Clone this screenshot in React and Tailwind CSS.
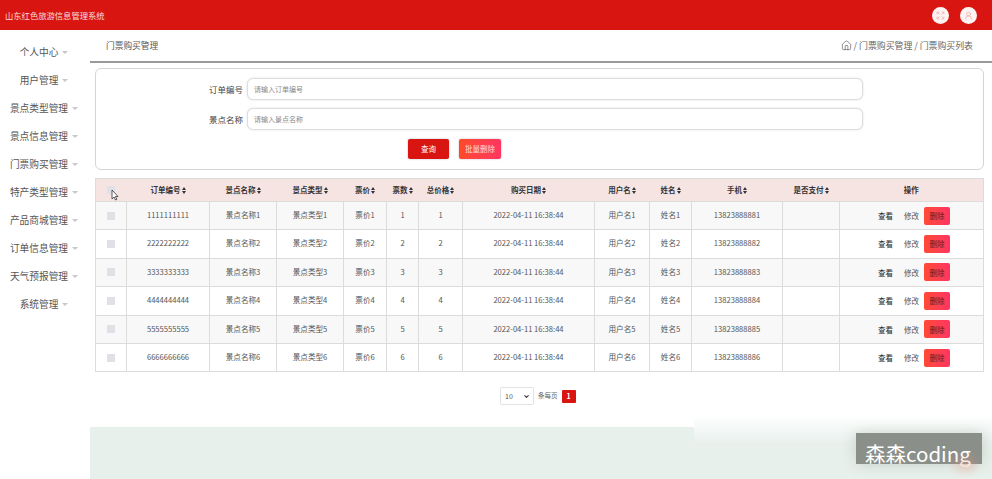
import React from 'react';
import { Expand, UserRound, Home, ChevronDown } from 'lucide-react';

const menu = ['个人中心', '用户管理', '景点类型管理', '景点信息管理', '门票购买管理', '特产类型管理', '产品商城管理', '订单信息管理', '天气预报管理', '系统管理'];

const columns = [
  { label: '', width: 'w-[31px]' },
  { label: '订单编号', width: 'w-[83px]' },
  { label: '景点名称', width: 'w-[67px]' },
  { label: '景点类型', width: 'w-[67px]' },
  { label: '票价', width: 'w-[43px]' },
  { label: '票数', width: 'w-[32px]' },
  { label: '总价格', width: 'w-[44px]' },
  { label: '购买日期', width: 'w-[132px]' },
  { label: '用户名', width: 'w-[55px]' },
  { label: '姓名', width: 'w-[42px]' },
  { label: '手机', width: 'w-[91px]' },
  { label: '是否支付', width: 'w-[57px]' },
  { label: '操作', width: '', plain: true },
];

const rows = [1, 2, 3, 4, 5, 6];

const SortIcon = () => (
  <svg width="4" height="7" viewBox="0 0 4 7" className="inline-block ml-px align-[-1px]">
    <path d="M2 0 4 3H0zM2 7 0 4h4z" fill="#333" />
  </svg>
);

const Caret = () => (
  <span className="inline-block ml-1 align-middle w-0 h-0 border-x-[3px] border-x-transparent border-t-[3px] border-t-[#c8c8c8]" />
);

const Field = ({ label, placeholder }) => (
  <div className="flex items-center h-[22px]">
    <label className="w-[151px] pr-[4px] text-right text-[8.5px] text-[#444]">{label}</label>
    <input
      readOnly
      placeholder={placeholder}
      className="w-[616px] h-[22px] px-[6px] text-[7px] bg-white border border-[#dedede] rounded-[6px] shadow-[0_0_2px_rgba(0,0,0,0.15)] outline-none placeholder:text-[#888]"
    />
  </div>
);

export default function App() {
  return (
    <div className="relative w-[992px] h-[479px] overflow-hidden bg-white font-['Noto_Sans_CJK_SC','Noto_Sans',sans-serif]">
      <header className="h-[30px] bg-[#d91512] flex items-center justify-between pl-[5px] pr-[15px]">
        <span className="text-[8.3px] text-[#f8dcdc]">山东红色旅游信息管理系统</span>
        <div className="flex items-center gap-[11px]">
          <span className="w-[17px] h-[17px] rounded-full bg-[#fdf3f3] flex items-center justify-center">
            <Expand size={9} color="#f2a9a9" />
          </span>
          <span className="w-[17px] h-[17px] rounded-full bg-[#fdf3f3] flex items-center justify-center">
            <UserRound size={9} color="#f2a9a9" />
          </span>
        </div>
      </header>

      <div className="flex h-[449px]">
        <aside className="w-[90px] shrink-0 pt-[8px] pr-[2px]">
          {menu.map((m) => (
            <div key={m} className="h-[28px] flex items-center justify-center text-[9.7px] text-[#555]">
              {m}
              <Caret />
            </div>
          ))}
        </aside>

        <main className="flex-1 min-w-0 flex flex-col">
          <div className="h-[33px] shrink-0 flex items-center justify-between pl-[16px] pr-[19px] border-b-2 border-[#9a9a9a]">
            <span className="text-[8.7px] text-[#555]">门票购买管理</span>
            <span className="flex items-center text-[8.9px] text-[#666]">
              <Home size={11} strokeWidth={1.4} color="#555" className="mr-[2px]" />
              / 门票购买管理 / 门票购买列表
            </span>
          </div>

          <div className="pl-[5px] pr-[8px] pt-[5px]">
            <section className="h-[102px] border border-[#d5d5d5] rounded-[6px] pt-[9px]">
              <div className="flex flex-col gap-[8px]">
                <Field label="订单编号" placeholder="请输入订单编号" />
                <Field label="景点名称" placeholder="请输入景点名称" />
              </div>
              <div className="flex gap-[10px] pl-[312px] mt-[9px]">
                <button className="w-[41px] h-[20px] rounded-[2px] bg-[#d91512] text-white text-[7.5px] shadow-[0_0_2px_rgba(60,60,120,0.4)]">查询</button>
                <button className="w-[42px] h-[20px] rounded-[2px] bg-gradient-to-r from-[#ff4a25] to-[#ff3560] text-[#fbdcdc] text-[7.5px] shadow-[0_0_2px_rgba(60,60,120,0.4)]">批量删除</button>
              </div>
            </section>

            <table className="mt-[8px] w-[889px] table-fixed border-collapse border border-[#dcdcdc] text-[7.6px] text-[#555]">
              <thead>
                <tr className="h-[23px] bg-[#f6e4e3]">
                  {columns.map((c, i) => (
                    <th key={i} className={`${c.width} p-0 text-[7.5px] font-bold text-[#333]`}>
                      {i === 0 ? (
                        <span className="block w-[8px] h-[8px] mx-auto bg-[#dfe1e6]" />
                      ) : (
                        <>
                          {c.label}
                          {!c.plain && <SortIcon />}
                        </>
                      )}
                    </th>
                  ))}
                </tr>
              </thead>
              <tbody>
                {rows.map((n) => {
                  const digits = String(n).repeat(10);
                  const cells = [digits, `景点名称${n}`, `景点类型${n}`, `票价${n}`, n, n, '2022-04-11 16:38:44', `用户名${n}`, `姓名${n}`, `1382388888${n}`, ''];
                  return (
                    <tr key={n} className={`h-[28.4px] ${n % 2 ? 'bg-[#f8f8f8]' : 'bg-white'}`}>
                      <td className="p-0 border border-[#dcdcdc]">
                        <span className="block w-[8px] h-[8px] mx-auto bg-[#dfe1e6]" />
                      </td>
                      {cells.map((v, i) => (
                        <td key={i} className="p-0 pb-[2px] border border-[#dcdcdc] text-center">{v}</td>
                      ))}
                      <td className="p-0 border border-[#dcdcdc]">
                        <div className="flex items-center justify-end pr-[33px] text-[7.5px]">
                          <span className="text-[#222]">查看</span>
                          <span className="ml-[11px] text-[#555]">修改</span>
                          <button className="ml-[5px] w-[26px] h-[18px] rounded-[2px] bg-gradient-to-r from-[#ff4a35] to-[#ff3560] text-[#6a1a1a] text-[7.5px]">删除</button>
                        </div>
                      </td>
                    </tr>
                  );
                })}
              </tbody>
            </table>

            <div className="flex items-center mt-[15px] pl-[405px] h-[18px]">
              <div className="relative w-[34px] h-[18px]">
                <select className="block appearance-none w-full h-full text-[7px] text-[#555] bg-white border border-[#e2e2e2] rounded-[2px] pl-[4px]">
                  <option>10</option>
                </select>
                <ChevronDown size={7} strokeWidth={3.5} color="#333" className="absolute right-[4px] top-[6px] pointer-events-none" />
              </div>
              <span className="ml-[4px] text-[6.5px] text-[#666]">条每页</span>
              <span className="ml-[4px] w-[14px] h-[13px] rounded-[1px] bg-[#d91512] text-white text-[7px] font-bold flex items-center justify-center">1</span>
            </div>
          </div>

          <div className="mt-[10px] flex-1 flex">
            <div className="w-[604px] mt-[12px] bg-[#e7f0eb]" />
            <div className="flex-1 bg-gradient-to-b from-white to-[#e8f0ec] to-[45%]" />
          </div>
        </main>
      </div>

      {/* watermark sits over the page */}
      <div className="absolute left-[856px] top-[433px] w-[126px] h-[31px] bg-[#8b8f8a] text-white text-[20.5px] leading-[40px] pl-[9px] whitespace-nowrap shadow-[0_0_14px_rgba(120,130,120,0.3)]">
        森森coding
      </div>
      {/* reddish glow under the end of the watermark */}
      <div className="absolute left-[948px] top-[452px] w-[34px] h-[26px] bg-[radial-gradient(closest-side,rgba(240,150,120,0.3),rgba(240,150,120,0))]" />

      {/* mouse pointer in the screenshot */}
      <svg className="absolute left-[111px] top-[189px]" width="8" height="12" viewBox="0 0 8 12">
        <path d="M1 1v9l2-2 1.5 3 1.3-.6L4.4 7.5H7z" fill="#fff" stroke="#333" strokeWidth="0.8" />
      </svg>
    </div>
  );
}
